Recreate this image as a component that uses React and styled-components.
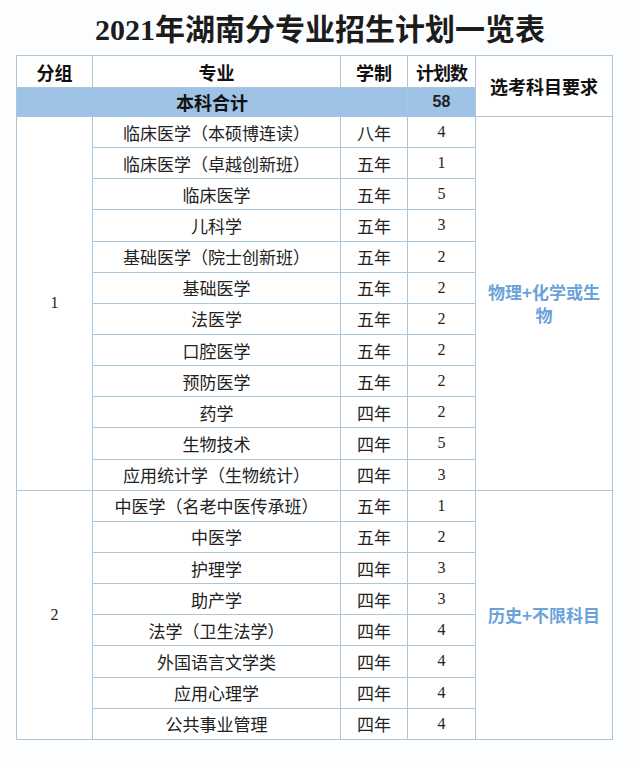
import React from 'react';
import styled, { createGlobalStyle } from 'styled-components';

const GlobalStyle = createGlobalStyle`
  html, body {
    margin: 0;
    padding: 0;
    background: #fcfdff;
  }
`;

// Styled Components
const Page = styled.div`
  width: 640px;
  height: 767px;
  background: #fcfdff;
  font-family: "Noto Sans CJK SC", sans-serif;
  color: #222;
`;

const Title = styled.h1`
  margin: 0;
  height: 55px;
  display: flex;
  align-items: center;
  justify-content: center;
  padding-bottom: 2px;
  box-sizing: border-box;
  font-family: "Liberation Serif", "Noto Sans CJK SC", serif;
  font-size: 30px;
  font-weight: 700;
  color: #1c1c1c;
  letter-spacing: 0;
`;

const Table = styled.table`
  margin-left: 16px;
  width: 597px;
  border-collapse: collapse;
  table-layout: fixed;
  background: #fff;
`;

const Cell = styled.td`
  border: 1px solid #a9c6da;
  padding: 0;
  text-align: center;
  vertical-align: middle;
  font-size: 17px;
  line-height: 1;
  white-space: nowrap;
  color: #222;
`;

const HeadCell = styled(Cell)`
  font-size: 18px;
  font-weight: 700;
  color: #111;
  letter-spacing: ${(p) => (p.$tight ? '-1px' : '0')};
`;

const HeadRow = styled.tr`
  height: 32px;
`;

const TotalRow = styled.tr`
  height: 29px;
  background: #9fc3e7;
`;

const DataRow = styled.tr`
  height: 31.15px;
`;

const NumCell = styled(Cell)`
  font-family: "Liberation Serif", serif;
  font-size: 16px;
`;

const GroupCell = styled(Cell)`
  font-family: "Liberation Serif", serif;
  font-size: 16px;
`;

const TotalNum = styled(Cell)`
  font-family: "Liberation Sans", sans-serif;
  font-size: 16px;
  font-weight: 700;
`;

const RequireCell = styled(Cell)`
  white-space: normal;
  padding: 0 6px;
  font-size: 17px;
  font-weight: 700;
  line-height: 23px;
  color: #6aa3d8;
`;

const groups = [
  {
    id: '1',
    require: '物理+化学或生物',
    rows: [
      ['临床医学（本硕博连读）', '八年', 4],
      ['临床医学（卓越创新班）', '五年', 1],
      ['临床医学', '五年', 5],
      ['儿科学', '五年', 3],
      ['基础医学（院士创新班）', '五年', 2],
      ['基础医学', '五年', 2],
      ['法医学', '五年', 2],
      ['口腔医学', '五年', 2],
      ['预防医学', '五年', 2],
      ['药学', '四年', 2],
      ['生物技术', '四年', 5],
      ['应用统计学（生物统计）', '四年', 3],
    ],
  },
  {
    id: '2',
    require: '历史+不限科目',
    rows: [
      ['中医学（名老中医传承班）', '五年', 1],
      ['中医学', '五年', 2],
      ['护理学', '四年', 3],
      ['助产学', '四年', 3],
      ['法学（卫生法学）', '四年', 4],
      ['外国语言文学类', '四年', 4],
      ['应用心理学', '四年', 4],
      ['公共事业管理', '四年', 4],
    ],
  },
];

// Component
const App = () => {
  return (
    <Page>
      <GlobalStyle />
      <Title>2021年湖南分专业招生计划一览表</Title>
      <Table>
        <colgroup>
          <col style={{ width: 76 }} />
          <col style={{ width: 248 }} />
          <col style={{ width: 67 }} />
          <col style={{ width: 68 }} />
          <col style={{ width: 137 }} />
        </colgroup>
        <tbody>
          <HeadRow>
            <HeadCell>分组</HeadCell>
            <HeadCell>专业</HeadCell>
            <HeadCell>学制</HeadCell>
            <HeadCell $tight>计划数</HeadCell>
            <HeadCell rowSpan={2}>选考科目要求</HeadCell>
          </HeadRow>
          <TotalRow>
            <HeadCell colSpan={3}>本科合计</HeadCell>
            <TotalNum>58</TotalNum>
          </TotalRow>
          {groups.map((g) =>
            g.rows.map((r, i) => (
              <DataRow key={g.id + i}>
                {i === 0 && <GroupCell rowSpan={g.rows.length}>{g.id}</GroupCell>}
                <Cell>{r[0]}</Cell>
                <Cell>{r[1]}</Cell>
                <NumCell>{r[2]}</NumCell>
                {i === 0 && <RequireCell rowSpan={g.rows.length}>{g.require}</RequireCell>}
              </DataRow>
            ))
          )}
        </tbody>
      </Table>
    </Page>
  );
};

export default App;
